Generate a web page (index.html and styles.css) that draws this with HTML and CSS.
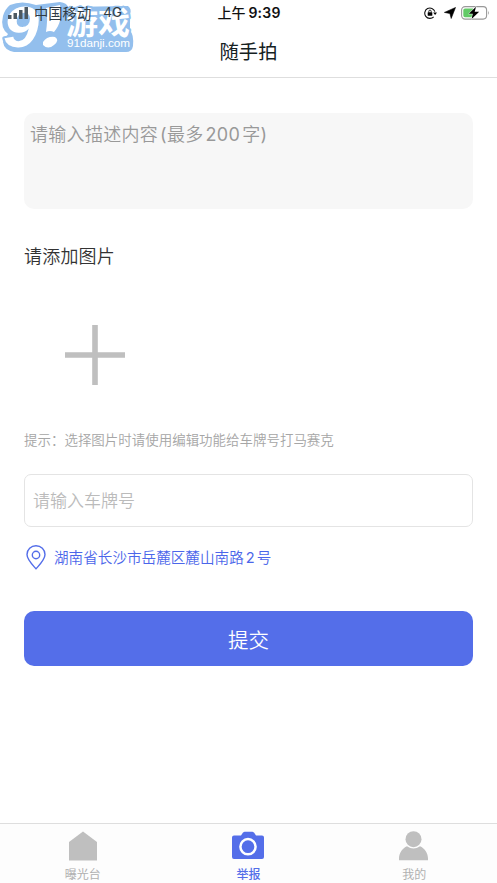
FILE: index.html
```html
<!DOCTYPE html>
<html lang="zh-CN">
<head>
<meta charset="utf-8">
<title>随手拍</title>
<link rel="stylesheet" href="styles.css">
</head>
<body>
<div class="app">
  <svg class="watermark" width="140" height="56" viewBox="0 0 140 56">
    <path class="plate" d="M10 5Q22 0 36 5L60 2Q67 3 68 7L128 6Q132 9 130 14V31Q134 34 133 46Q132 52 126 52H14Q4 50 3 42L8 34Q0 28 3 16Q5 9 10 5Z"/>
    <text class="nine mark" x="3" y="47" textLength="36" lengthAdjust="spacingAndGlyphs">9</text>
    <path class="mark" d="M46 8 60 5C62 17 60 25 54 32Q50 30 46 32C47 24 48 16 46 8ZM43 42Q47 36 55 37Q60 40 54 45 48 50 43 45Z"/>
    <text class="name mark" x="66" y="34" textLength="64" lengthAdjust="spacingAndGlyphs">游戏</text>
    <text class="site" x="67" y="47" textLength="63" lengthAdjust="spacingAndGlyphs">91danji.com</text>
  </svg>

  <header class="header">
    <div class="status">
      <div class="carrier">
        <svg width="20" height="14" viewBox="0 0 20 14"><path d="M0 9h3.500v4H0zM5.500 7H9v6H5.500zM11 4h3.500v9H11zM16.500 1H20v12h-3.500z"/></svg>
        <span class="operator">中国移动</span><span class="network">4G</span>
      </div>
      <div class="clock"><span>上午</span><b>9:39</b></div>
      <div class="indicators">
        <svg width="13" height="12" viewBox="0 0 13 12"><path d="M10.900 4.600A5.200 5.200 0 1 0 9.700 9.800" fill="none" stroke="#111" stroke-width="1.100"/><path d="M9.200 5.500H13l-1.900 2.500z"/><rect x="3.700" y="5.300" width="4.600" height="3.500" rx=".5"/><path d="M4.800 5.500V4.300a1.200 1.200 0 0 1 2.400 0v1.200" fill="none" stroke="#111" stroke-width=".9"/></svg>
        <svg width="12" height="12" viewBox="0 0 12 12"><path d="M11.500.5 7.200 11.500 5.900 6.500.4 5.400z" stroke="#000" stroke-width=".6" stroke-linejoin="round"/></svg>
        <svg width="29" height="14" viewBox="0 0 29 14"><rect x=".6" y=".6" width="25" height="12.500" rx="3.500" fill="#fff" stroke="#999" stroke-width="1.100"/><path d="M4 2.400h8v8.900H4A1.700 1.700 0 0 1 2.300 9.600V4.100A1.700 1.700 0 0 1 4 2.400z" fill="#62ca67"/><path d="M27 4.700q1.700 2.200 0 4.400z" fill="#999"/><path d="M15 .7 7.800 7.800h4L10.600 13 18.200 5.800h-4.500z" stroke="#fff" stroke-width="1" paint-order="stroke"/></svg>
      </div>
    </div>
    <h1 class="title">随手拍</h1>
  </header>

  <main class="content">
    <div class="description">请输入描述内容<span class="latin open">(</span>最多<span class="latin num">200</span>字<span class="latin">)</span></div>
    <h2 class="section">请添加图片</h2>
    <div class="add"><svg width="60" height="60" viewBox="0 0 60 60"><path d="M27.200 0h5.600v27.200H60v5.600H32.800V60h-5.600V32.800H0v-5.600h27.200z"/></svg></div>
    <p class="hint">提示：选择图片时请使用编辑功能给车牌号打马赛克</p>
    <div class="plate-input">请输入车牌号</div>
    <div class="location">
      <svg width="20" height="25" viewBox="0 0 20 25"><path d="M10 23.800C6.500 19.800 1 14.500 1 9.500a9 8.700 0 0 1 18 0c0 5-5.500 10.300-9 14.300z"/><circle cx="10" cy="10" r="3.700"/></svg>
      <span>湖南省长沙市岳麓区麓山南路<span class="latin road">2</span>号</span>
    </div>
    <button class="submit">提交</button>
  </main>

  <nav class="tabs">
    <a class="tab"><svg width="34" height="30" viewBox="0 0 34 30"><path d="M17 .5 31 11v18.500H3V11z"/></svg><span>曝光台</span></a>
    <a class="tab active"><svg width="34" height="30" viewBox="0 0 34 30"><path d="M3 4.500h7l2-3 1.500-.7h8l1.500.7 2 3h6a2 2 0 0 1 2 2V26a2 2 0 0 1-2 2H3a2 2 0 0 1-2-2V6.500a2 2 0 0 1 2-2z"/><circle cx="17" cy="15.700" r="7.600" fill="none" stroke="#fff" stroke-width="2.500"/></svg><span>举报</span></a>
    <a class="tab"><svg width="34" height="30" viewBox="0 0 34 30"><path d="M2 29.300v-2C2 22 5.500 17 10 15.200q6.500 4.600 13 0C27.500 17 31 22 31 27.300v2z"/><circle cx="16.500" cy="8.200" r="8"/></svg><span>我的</span></a>
  </nav>
</div>
</body>
</html>
```

FILE: styles.css
```css
* { box-sizing: border-box; }
body { margin: 0; background: #fff; font-family: "Noto Sans CJK SC", sans-serif; font-weight: 350; }
.app { position: relative; display: flex; flex-direction: column; width: 497px; height: 883px; overflow: hidden; }
svg { display: block; flex: none; }

.watermark { position: absolute; left: 0; top: 0; }
.mark { fill: #fff; stroke: #93bfed; stroke-width: 4; stroke-linejoin: round; paint-order: stroke; }
.plate { fill: #93bfed; }
.nine { font: italic 700 57px "Liberation Sans", sans-serif; }
.name { font: 700 31px "Noto Sans CJK SC", sans-serif; }
.site { font: 11.500px "Liberation Sans", sans-serif; fill: #fff; }

.header { position: relative; height: 78px; border-bottom: 1px solid #dedede; }
.status { display: grid; grid-template-columns: 1fr auto 1fr; align-items: center; height: 25px; padding: 0 7px 0 8px; font-size: 14px; line-height: 23px; }
.carrier { display: flex; align-items: center; color: #303a42; }
.carrier svg { fill: #4d5962; }
.operator { margin-left: 6px; font-size: 14.300px; font-weight: 400; }
.network { margin-left: 12px; font-family: Inter, sans-serif; font-size: 13.500px; font-weight: 400; }
.clock { display: flex; gap: 3px; font-weight: 500; color: #111; }
.clock b { font: 600 14px/24px Inter, sans-serif; letter-spacing: .2px; }
.indicators { display: flex; justify-content: flex-end; align-items: center; gap: 7px; }
.indicators svg:last-child { margin-left: -2px; }
.title { margin: 12px 0 0; text-align: center; font-size: 19.300px; line-height: 28px; font-weight: 400; color: #15211f; }

.content { flex: 1; padding: 35px 24px 0; }
.latin { font-family: Inter, sans-serif; font-weight: 400; }
.open { margin-left: 2px; }
.description { height: 96px; padding: 7px 6px; border-radius: 10px; background: #f7f7f7; color: #999; font-size: 18px; line-height: 26px; letter-spacing: .3px; }
.num { margin: 0 2px; }
.section { margin: 32px 0 0; font-size: 18px; line-height: 28px; font-weight: 350; letter-spacing: .2px; color: #333; }
.add { padding: 56px 41px 0; fill: #bfbfbf; }
.hint { margin: 44px 0 0; font-size: 13.480px; line-height: 20px; color: #a6a6a6; }
.plate-input { height: 53px; margin-top: 25px; padding: 0 8px; border: 1px solid #e4e4e4; border-radius: 7px; font-size: 17px; line-height: 49px; color: #bbb; }
.location { display: flex; align-items: center; gap: 8px; height: 26px; margin-top: 17px; padding-left: 2px; font-size: 14.600px; line-height: 26px; color: #4b66ea; }
.location svg { fill: none; stroke: #536de9; stroke-width: 1.400; }
.road { margin: 0 2px; }
.submit { display: block; width: 100%; height: 55px; margin-top: 41px; padding: 1px 0 0; border: 0; border-radius: 10px; background: #546ee9; color: #fff; font: 350 20.500px/54px "Noto Sans CJK SC", sans-serif; }

.tabs { display: grid; grid-template-columns: repeat(3, 1fr); height: 60px; border-top: 1px solid #dedede; background: #fdfdfd; }
.tab { display: flex; flex-direction: column; align-items: center; padding-top: 7px; color: #b0b0b0; font-size: 12px; line-height: 18px; font-weight: 400; }
.tab svg { fill: #bfbfbf; }
.tab span { margin-top: 4px; }
.tab.active { color: #536de9; font-weight: 500; }
.active svg { fill: #546ee9; }
```
